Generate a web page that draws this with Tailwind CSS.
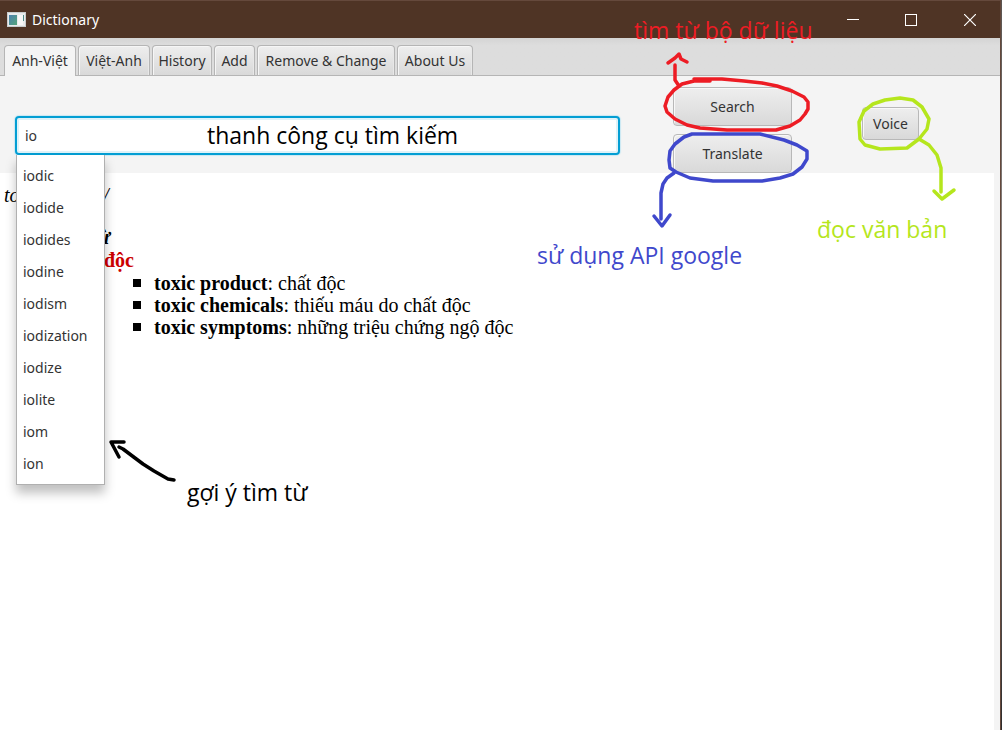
<!DOCTYPE html>
<html lang="vi">
<head>
<meta charset="utf-8">
<meta name="viewport" content="width=device-width, initial-scale=1">
<title>Dictionary</title>
<script src="https://cdn.jsdelivr.net/npm/@tailwindcss/browser@4"></script>
</head>
<body class="min-h-screen overflow-hidden bg-white font-['Noto_Sans',sans-serif] text-sm text-[#333333]">
<div class="relative flex min-h-screen">
  <div class="flex min-w-0 flex-1 flex-col bg-[#f4f4f4]">
    <header class="flex h-[38px] items-center border-t border-[#65493c] bg-[#4f3425] pl-[7px] text-white">
      <svg class="h-[15px] w-[19px]" viewBox="0 0 19 15" aria-hidden="true">
        <defs><linearGradient id="ic" x1="0" y1="0" x2="1" y2="1"><stop offset="0" stop-color="#4b7fae"/><stop offset="1" stop-color="#54a57a"/></linearGradient></defs>
        <rect width="19" height="15" fill="#e9ebec"/><rect x=".5" y=".5" width="18" height="14" fill="none" stroke="#c8cccd"/>
        <rect x="2" y="3" width="8" height="10" fill="url(#ic)"/><rect x="11" y="3" width="5" height="10" fill="#f7f7f7"/><rect x="16" y="3" width="1" height="6" fill="#4c8c86"/>
      </svg>
      <h1 class="ml-[6px] text-sm">Dictionary</h1>
      <div class="ml-auto flex self-stretch">
        <button class="flex w-[58px] items-center justify-center" aria-label="Minimize"><svg class="size-3" viewBox="0 0 12 12"><path d="M0 5.500H12" stroke="white"/></svg></button>
        <button class="flex w-[58px] items-center justify-center" aria-label="Maximize"><svg class="size-3" viewBox="0 0 12 12"><rect x=".5" y=".5" width="11" height="11" fill="none" stroke="white"/></svg></button>
        <button class="flex w-[60px] items-center justify-center" aria-label="Close"><svg class="size-3" viewBox="0 0 12 12"><path d="M0 0L12 12M12 0L0 12" stroke="white" stroke-width="1.200"/></svg></button>
      </div>
    </header>
    <nav class="flex h-[38px] items-end gap-[2px] border-b border-[#b5b5b5] bg-linear-to-b from-[#d4d4d4] to-[#dddddd] to-20% pl-1" role="tablist">
      <button role="tab" aria-selected="true" class="-mb-px h-[31px] w-[72px] rounded-t border border-b-0 border-[#b5b5b5] bg-[#f4f4f4]">Anh-Việt</button>
      <button role="tab" class="h-[30px] w-[72px] rounded-t border border-b-0 border-[#b5b5b5] bg-linear-to-b from-[#eeeeee] to-[#d9d9d9] shadow-[inset_1px_1px_0_#f6f6f6,inset_-1px_0_0_#e8e8e8]">Việt-Anh</button>
      <button role="tab" class="h-[30px] w-[60px] rounded-t border border-b-0 border-[#b5b5b5] bg-linear-to-b from-[#eeeeee] to-[#d9d9d9] shadow-[inset_1px_1px_0_#f6f6f6,inset_-1px_0_0_#e8e8e8]">History</button>
      <button role="tab" class="h-[30px] w-[41px] rounded-t border border-b-0 border-[#b5b5b5] bg-linear-to-b from-[#eeeeee] to-[#d9d9d9] shadow-[inset_1px_1px_0_#f6f6f6,inset_-1px_0_0_#e8e8e8]">Add</button>
      <button role="tab" class="h-[30px] w-[138px] rounded-t border border-b-0 border-[#b5b5b5] bg-linear-to-b from-[#eeeeee] to-[#d9d9d9] shadow-[inset_1px_1px_0_#f6f6f6,inset_-1px_0_0_#e8e8e8]">Remove &amp; Change</button>
      <button role="tab" class="h-[30px] w-[76px] rounded-t border border-b-0 border-[#b5b5b5] bg-linear-to-b from-[#eeeeee] to-[#d9d9d9] shadow-[inset_1px_1px_0_#f6f6f6,inset_-1px_0_0_#e8e8e8]">About Us</button>
    </nav>
    <section class="relative z-10 flex h-[97px] items-start pr-[81px] pl-[15px]">
      <div class="relative mt-10 flex-1">
        <input id="word" aria-label="Word" value="io" class="block h-[39px] w-full rounded border-2 border-[#039ed3] bg-white px-2 text-sm text-[#333333] shadow-[0_0_1px_1px_#c9e8f3,inset_0_0_0_2px_#dff2f8] outline-none">
        <ul role="listbox" aria-label="Suggestions" class="absolute top-[39px] left-px z-20 w-[89px] border border-t-0 border-[#b0b0b0] bg-white pt-[5px] pb-1 shadow-[0_8px_10px_rgba(0,0,0,0.25)]">
          <li role="option" class="px-[6px] leading-8">iodic</li>
          <li role="option" class="px-[6px] leading-8">iodide</li>
          <li role="option" class="px-[6px] leading-8">iodides</li>
          <li role="option" class="px-[6px] leading-8">iodine</li>
          <li role="option" class="px-[6px] leading-8">iodism</li>
          <li role="option" class="px-[6px] leading-8">iodization</li>
          <li role="option" class="px-[6px] leading-8">iodize</li>
          <li role="option" class="px-[6px] leading-8">iolite</li>
          <li role="option" class="px-[6px] leading-8">iom</li>
          <li role="option" class="px-[6px] leading-8">ion</li>
        </ul>
      </div>
      <div class="mt-[11px] ml-[53px] flex w-[119px] flex-col gap-2">
        <button class="h-[39px] rounded border border-[#b8b8b8] bg-linear-to-b from-[#eeeeee] to-[#d9d9d9] shadow-[inset_1px_1px_0_#f8f8f8]">Search</button>
        <button class="h-[39px] rounded border border-[#b8b8b8] bg-linear-to-b from-[#eeeeee] to-[#d9d9d9] shadow-[inset_1px_1px_0_#f8f8f8]">Translate</button>
      </div>
      <button class="mt-[31px] ml-[70px] h-[33px] w-[57px] rounded border border-[#b8b8b8] bg-linear-to-b from-[#eeeeee] to-[#d9d9d9] shadow-[inset_1px_1px_0_#f8f8f8]">Voice</button>
    </section>
    <main class="mr-[6px] flex-1 bg-white pt-[11px] pl-1 font-['Liberation_Serif',serif] text-[20px] leading-[23px] text-black">
      <p class="italic">toxic /'tɔksik/</p>
      <p class="mt-[19px] pl-[50px] font-bold italic">tính từ</p>
      <p class="pl-[100px] font-bold text-[#cc0000]">độc</p>
      <ul class="pl-[129px] leading-[22px]">
        <li class="flex items-center gap-[13px]"><span class="size-2 bg-black"></span><span><b>toxic product</b>: chất độc</span></li>
        <li class="flex items-center gap-[13px]"><span class="size-2 bg-black"></span><span><b>toxic chemicals</b>: thiếu máu do chất độc</span></li>
        <li class="flex items-center gap-[13px]"><span class="size-2 bg-black"></span><span><b>toxic symptoms</b>: những triệu chứng ngộ độc</span></li>
      </ul>
    </main>
  </div>
  <div class="w-[2px] border-l border-[#65493c] bg-linear-to-b from-[#5b5450] via-[#a19a98] to-[#2e2b2b]"></div>

  <!-- Hand-drawn annotations -->
  <div class="pointer-events-none absolute inset-0 z-30 font-['Open_Sans',sans-serif] text-[23px] leading-8 whitespace-nowrap">
    <svg class="absolute top-0 left-0 h-[730px] w-[1002px]" viewBox="0 0 1002 730" fill="none" stroke-width="3.500" stroke-linecap="round" stroke-linejoin="round" aria-hidden="true">
      <g stroke="#ed1c24">
        <path d="M710 81L694 81L682 84L674 90L668 97L665 106L667 112L675 119L687 125L700 128L727 130L776 130L790 126L800 120L805 114L808 109L808 102L804 97L792 91L777 86L762 83L744 81L722 79L694 79"/>
        <path d="M679 86L675 80L675 65M668 63L675 58L679 54L681 59L687 62"/>
      </g>
      <g stroke="#3f48cc">
        <path d="M692 134L684 137L675 144L670 151L669 160L670 168L676 172L690 178L713 181L762 181L780 178L793 174L802 167L807 159L807 151L797 145L784 140L760 134L692 134"/>
        <path d="M674 173L667 178L663 184L661 193L661 219M654 216L662 226L670 215"/>
      </g>
      <g stroke="#b5e61d">
        <path d="M919 139L907 148L880 149L865 145L860 139L859 122L864 111L873 104L885 100L900 98L913 100L922 107L929 119L927 129L919 139L929 145L937 155L941 168L941 192M934 191L942 199L954 190"/>
      </g>
      <g stroke="black">
        <path d="M174 480L168 479L154 471L143 464L135 458L123 449L119 447M124 442L111 442L119 457"/>
      </g>
    </svg>
    <span class="absolute top-[119px] left-[207px] text-black">thanh công cụ tìm kiếm</span>
    <span class="absolute top-[14px] left-[634px] text-[#ed1c24]">tìm từ bộ dữ liệu</span>
    <span class="absolute top-[239px] left-[537px] text-[#3f48cc]">sử dụng API google</span>
    <span class="absolute top-[213px] left-[817px] text-[#b5e61d]">đọc văn bản</span>
    <span class="absolute top-[476px] left-[187px] text-black">gợi ý tìm từ</span>
  </div>
</div>
</body>
</html>
